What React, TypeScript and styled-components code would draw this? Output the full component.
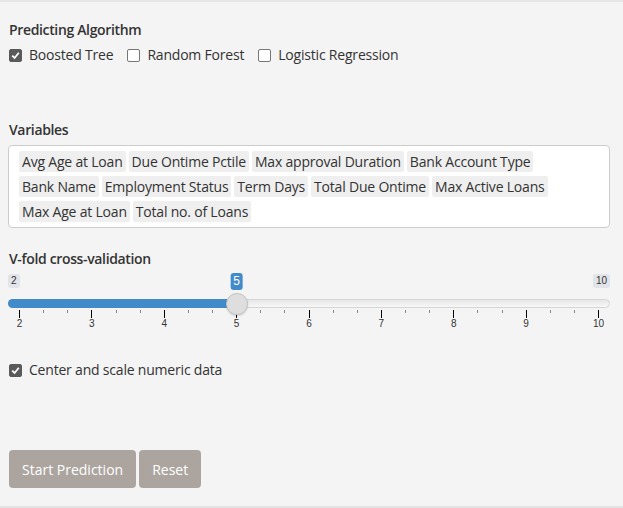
import React from "react";
import styled, { createGlobalStyle } from "styled-components";

const FONT = `"Open Sans", "Noto Sans", sans-serif`;

const Global = createGlobalStyle`
  html, body { margin: 0; padding: 0; background: #f4f4f4; }
  body { font-family: ${FONT}; color: #333; font-size: 14px; }
  * { box-sizing: border-box; }
`;

const Well = styled.div`
  width: 623px;
  height: 508px;
  background: #f4f4f4;
  border-top: 2px solid #e6e6e6;
  border-bottom: 2px solid #e3e3e3;
  padding: 18px 13px 0 8px;
  display: flex;
  flex-direction: column;
`;

const Label = styled.div`
  font-weight: 600;
  font-size: 14px;
  line-height: 20px;
  letter-spacing: -0.35px;
  margin-bottom: 5px;
  padding-left: 1px;
`;

const Group = styled.div<{ $mb: number }>`
  margin-bottom: ${(p) => p.$mb}px;
`;

const CheckRow = styled.div`
  display: flex;
  align-items: center;
  gap: 14px;
  padding-left: 1px;
`;

const CheckLabel = styled.label`
  display: flex;
  align-items: center;
  gap: 7px;
  font-size: 14px;
  line-height: 20px;
  letter-spacing: -0.2px;
`;

const Box = styled.span<{ $on: boolean }>`
  width: 13px;
  height: 13px;
  border-radius: 2px;
  display: inline-flex;
  align-items: center;
  justify-content: center;
  background: ${(p) => (p.$on ? "#5a5a5a" : "#fff")};
  border: 1px solid ${(p) => (p.$on ? "#5a5a5a" : "#767676")};
`;

const Check = ({ on, children }: { on: boolean; children: React.ReactNode }) => (
  <CheckLabel>
    <Box $on={on}>
      {on && (
        <svg width="9" height="9" viewBox="0 0 9 9">
          <path d="M1.2 4.6 L3.6 7 L7.8 1.8" stroke="#fff" strokeWidth="1.8" fill="none" />
        </svg>
      )}
    </Box>
    {children}
  </CheckLabel>
);

const SelectBox = styled.div`
  background: #fff;
  border: 1px solid #cccccc;
  border-radius: 4px;
  padding: 5px 7px 1px 10px;
  display: flex;
  flex-wrap: wrap;
`;

const Tag = styled.span`
  background: #efefef;
  color: #333;
  font-size: 14px;
  letter-spacing: -0.2px;
  line-height: 21px;
  height: 21px;
  padding: 0 3px;
  margin: 0 3px 4px 0;
  border-radius: 2px;
  white-space: nowrap;
`;

const Slider = styled.div`
  position: relative;
  height: 64px;
`;

const EndLabel = styled.span<{ $side: "left" | "right" }>`
  position: absolute;
  top: 0;
  ${(p) => (p.$side === "left" ? "left: 0;" : "right: 0;")}
  background: #e1e4e9;
  color: #333;
  font-family: "Liberation Sans", Arial, sans-serif;
  font-size: 10px;
  line-height: 14px;
  padding: 0 3px;
  border-radius: 3px;
`;

const ValueLabel = styled.span`
  position: absolute;
  top: -1px;
  transform: translateX(-50%);
  background: #428bca;
  color: #fff;
  font-family: "Liberation Sans", Arial, sans-serif;
  font-size: 12px;
  line-height: 17px;
  padding: 0 3px;
  border-radius: 3px;
`;

const Track = styled.div`
  position: absolute;
  left: 0;
  right: 0;
  top: 25px;
  height: 9px;
  border-radius: 5px;
  background: linear-gradient(#e6e6e6, #f8f8f8);
  border: 1px solid #d6d6d6;
`;

const Bar = styled.div`
  position: absolute;
  left: 0;
  top: 25px;
  height: 9px;
  border-radius: 5px 0 0 5px;
  background: #428bca;
`;

const Handle = styled.div`
  position: absolute;
  top: 19px;
  width: 22px;
  height: 22px;
  transform: translateX(-50%);
  border-radius: 50%;
  background: #dedede;
  border: 1px solid #c4c4c4;
  box-shadow: 0 1px 2px rgba(0, 0, 0, 0.15);
`;

const Tick = styled.span<{ $major: boolean }>`
  position: absolute;
  top: 36px;
  width: 1px;
  height: ${(p) => (p.$major ? 8 : 3)}px;
  background: ${(p) => (p.$major ? "#000" : "#888")};
`;

const TickLabel = styled.span`
  position: absolute;
  top: 44px;
  transform: translateX(-50%);
  font-family: "Liberation Sans", Arial, sans-serif;
  font-size: 10px;
  color: #333;
`;

const Buttons = styled.div`
  display: flex;
  gap: 3px;
  margin-top: auto;
  margin-bottom: 18px;
  padding-left: 1px;
`;

const Button = styled.button`
  background: #aca59f;
  color: #fff;
  border: none;
  border-radius: 4px;
  height: 38px;
  padding: 0 13px;
  font-family: ${FONT};
  font-size: 14px;
`;

const tags = [
  "Avg Age at Loan",
  "Due Ontime Pctile",
  "Max approval Duration",
  "Bank Account Type",
  "Bank Name",
  "Employment Status",
  "Term Days",
  "Total Due Ontime",
  "Max Active Loans",
  "Max Age at Loan",
  "Total no. of Loans",
];

const MIN = 2;
const MAX = 10;
const VAL = 5;
const X0 = 11;
const SPAN = 579;
const pos = (v: number) => X0 + ((v - MIN) / (MAX - MIN)) * SPAN;

export default function App() {
  const ticks: { x: number; major: boolean }[] = [];
  for (let v = MIN; v <= MAX; v++) {
    ticks.push({ x: pos(v), major: true });
    if (v < MAX) {
      ticks.push({ x: pos(v + 1 / 3), major: false });
      ticks.push({ x: pos(v + 2 / 3), major: false });
    }
  }
  const labels = Array.from({ length: MAX - MIN + 1 }, (_, i) => MIN + i);
  return (
    <>
      <Global />
      <Well>
        <Group $mb={55}>
          <Label>Predicting Algorithm</Label>
          <CheckRow>
            <Check on>Boosted Tree</Check>
            <Check on={false}>Random Forest</Check>
            <Check on={false}>Logistic Regression</Check>
          </CheckRow>
        </Group>
        <Group $mb={21}>
          <Label>Variables</Label>
          <SelectBox>
            {tags.map((t) => (
              <Tag key={t}>{t}</Tag>
            ))}
          </SelectBox>
        </Group>
        <Group $mb={22}>
          <Label>V-fold cross-validation</Label>
          <Slider>
            <EndLabel $side="left">2</EndLabel>
            <EndLabel $side="right">10</EndLabel>
            <Track />
            <Bar style={{ width: pos(VAL) }} />
            {ticks.map((t, i) => (
              <Tick key={i} $major={t.major} style={{ left: t.x }} />
            ))}
            {labels.map((v) => (
              <TickLabel key={v} style={{ left: pos(v) + 0.5 }}>
                {v}
              </TickLabel>
            ))}
            <ValueLabel style={{ left: pos(VAL) + 0.5 }}>{VAL}</ValueLabel>
            <Handle style={{ left: pos(VAL) + 0.5 }} />
          </Slider>
        </Group>
        <CheckRow>
          <Check on>Center and scale numeric data</Check>
        </CheckRow>
        <Buttons>
          <Button>Start Prediction</Button>
          <Button>Reset</Button>
        </Buttons>
      </Well>
    </>
  );
}
